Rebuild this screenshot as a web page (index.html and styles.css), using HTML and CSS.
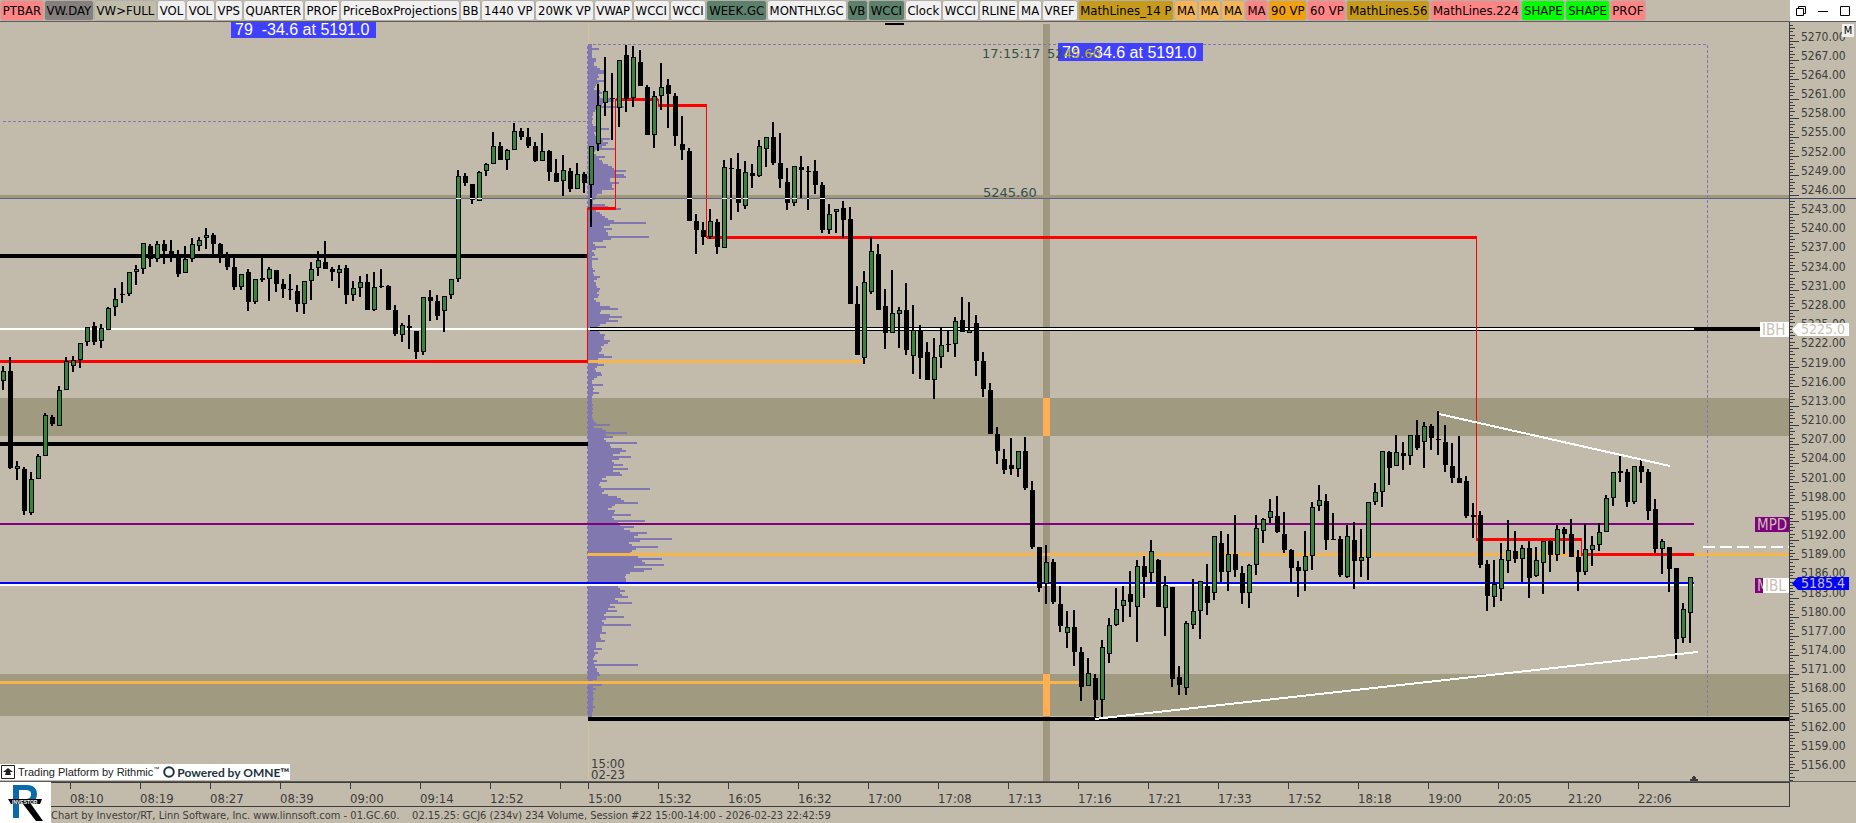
FILE: index.html
```html
<!DOCTYPE html>
<html lang="en">

<head>
  <meta charset="UTF-8" />
  <meta name="viewport" content="width=device-width, initial-scale=1.0" />
  <title>GCJ6 (234v) 234 Volume</title>
  <link rel="stylesheet" href="styles.css">
</head>

<body>
  <header class="toolbar">
    <nav class="tabs">
      <button class="tab red">PTBAR</button>
      <button class="tab gray">VW.DAY</button>
      <button class="tab plain">VW&gt;FULL</button>
      <button class="tab">VOL</button>
      <button class="tab">VOL</button>
      <button class="tab">VPS</button>
      <button class="tab">QUARTER</button>
      <button class="tab">PROF</button>
      <button class="tab">PriceBoxProjections</button>
      <button class="tab">BB</button>
      <button class="tab">1440 VP</button>
      <button class="tab">20WK VP</button>
      <button class="tab">VWAP</button>
      <button class="tab">WCCI</button>
      <button class="tab">WCCI</button>
      <button class="tab green">WEEK.GC</button>
      <button class="tab">MONTHLY.GC</button>
      <button class="tab green">VB</button>
      <button class="tab green">WCCI</button>
      <button class="tab">Clock</button>
      <button class="tab">WCCI</button>
      <button class="tab">RLINE</button>
      <button class="tab">MA</button>
      <button class="tab">VREF</button>
      <button class="tab gold">MathLines_14 P</button>
      <button class="tab sand">MA</button>
      <button class="tab sand">MA</button>
      <button class="tab sand">MA</button>
      <button class="tab red">MA</button>
      <button class="tab orange">90 VP</button>
      <button class="tab red">60 VP</button>
      <button class="tab gold">MathLines.56</button>
      <button class="tab red">MathLines.224</button>
      <button class="tab lime">SHAPE</button>
      <button class="tab lime">SHAPE</button>
      <button class="tab red">PROF</button>
    </nav>
    <div class="window-buttons">
      <button class="win-btn" aria-label="Restore">
        <svg width="10" height="10" viewBox="0 0 10 10"><path d="M.5 2.5h7v7h-7zM2.5 2.5v-2h7v7h-2" /></svg>
      </button>
      <button class="win-btn" aria-label="Minimize">
        <svg width="10" height="10" viewBox="0 0 10 10"><path d="M0 5.5h10" /></svg>
      </button>
      <button class="win-btn" aria-label="Maximize">
        <svg width="10" height="10" viewBox="0 0 10 10"><path d="M.5.5h9v9h-9z" /></svg>
      </button>
    </div>
  </header>

  <main class="main">
    <div class="chart">
      <svg class="plot" viewBox="0 22 1789 759" preserveAspectRatio="none">
        <!-- zones -->
        <rect class="zone" x="0" y="398" width="1789" height="38" />
        <rect class="zone" x="0" y="674" width="1789" height="42" />
        <rect class="zone-line" x="0" y="195" width="1789" height="3" />
        <rect class="zone-line" x="1043" y="24" width="7" height="757" />
        <rect class="zone-hit" x="1043" y="398" width="7" height="38" />
        <rect class="zone-hit" x="1043" y="674" width="7" height="42" />
        <path class="session" d="M588.5 23V781" />

        <g class="js-profile profile"></g>
        <path class="dashed" d="M3 121.5H588M588 44.5H1707.5V716M587.5 46V716" />

        <!-- levels -->
        <g class="levels">
          <path stroke="#000" stroke-width="4" d="M0 256H588M0 444H588M588 719H1789M590 329H1760" />
          <path stroke="#fff" stroke-width="2" d="M0 329H1694M0 585H1694" />
          <path stroke="#00f" stroke-width="2" d="M0 583H1694" />
          <path stroke="#f5b54a" stroke-width="3" d="M588 361.5H864M588 554.5H1789M0 682.5H1079" />
          <path stroke="#800080" stroke-width="2" d="M0 524H1694" />
          <path stroke="#f00" stroke-width="3" d="M0 361.5H588M588 208.5H616M616 99.5H658M658 105.5H707M707 237.5H1477M1476 539.5H1582M1581 554.5H1694" />
          <path stroke="#f00" stroke-width="1" d="M587.5 361V208M615.5 209V99M658.5 99V106M706.5 105V238M1476.5 237V540M1581.5 539V555" />
          <path stroke="#fff" stroke-width="2" stroke-dasharray="12 5" d="M1703 547H1789" />
          <path stroke="#000" stroke-width="2" d="M885 24H904" />
        </g>

        <g class="js-candles"></g>

        <path class="cross" d="M0 198.5H1789" />
        <g class="js-cross-hits" fill="#fff"></g>

        <path class="trend" d="M1439 414L1670 466M1095 719L1698 652" />
        <path fill="#3c3c3c" d="M1690 781v-2h2v-2h1v-1h2v1h1v2h2v2z" />

        <!-- notes on the plot -->
        <rect class="note-box" x="231" y="22" width="145" height="16" />
        <text class="note" x="235" y="35" xml:space="preserve">79  -34.6 at 5191.0</text>
        <rect class="note-box" x="1058" y="43" width="145" height="18" />
        <text class="note" x="1062" y="58" xml:space="preserve">79  -34.6 at 5191.0</text>
        <text class="cursor-text" x="982" y="58">17:15:17</text>
        <text class="cursor-text" x="1047" y="58">52<tspan fill="#b9b400">45.60</tspan></text>
        <text class="cursor-text" x="983" y="197">5245.60</text>
        <text class="axis-text" x="591" y="768">15:00</text>
        <text class="axis-text" x="591" y="779">02-23</text>

        <rect x="1760" y="322" width="29" height="15" fill="#fff" />
        <text class="level-text" x="1762" y="335">IBH</text>
        <rect x="1755" y="517" width="34" height="15" fill="#800080" />
        <text class="level-text" x="1757" y="530">MPD</text>
        <rect x="1755" y="578" width="34" height="15" fill="#800080" />
        <text class="level-text" x="1757" y="591">M</text>
        <rect x="1763" y="578" width="26" height="15" fill="#fff" />
        <text class="level-text" x="1765" y="591">IBL</text>
      </svg>

      <div class="brands">
        <svg width="16" height="14" viewBox="0 0 16 14">
          <path d="M1.5.5h13v13h-13z" fill="#fff" stroke="#222" />
          <path d="M8 3l5 4h-3l1 3H5l1-3H3z" fill="#222" />
        </svg>
        <span class="brand-rithmic">Trading Platform by Rithmic<sup>™</sup></span>
        <svg class="ring" width="12" height="12" viewBox="0 0 12 12"><circle cx="6" cy="6" r="4.8" fill="none" stroke="#1d3340" stroke-width="2" /></svg>
        <span class="brand-omne">Powered by OMNE™</span>
      </div>
    </div>

    <aside class="price-axis">
      <svg class="ticks" viewBox="0 22 10 759" preserveAspectRatio="none"><path class="js-ticks" d="" /></svg>
      <div class="prices js-prices"></div>
      <button class="m-btn">M</button>
      <div class="tag tag-ibh">5225.0</div>
      <div class="tag tag-last">5185.4</div>
      <div class="cross-axis"></div>
    </aside>
  </main>

  <footer class="footer">
    <div class="logo">
      <svg width="36" height="38" viewBox="0 0 36 38">
        <path d="M5 1h14c7 0 10 4 10 9 0 6-4 9-10 10h-8v14H5zM11 6v9h6c4 0 6-1 6-5 0-3-2-4-6-4z" fill="#0a6ba8" fill-rule="evenodd" />
        <path d="M15 20h8l12 17h-7z" fill="#000" />
        <path d="M0 15h34l-2 5H3z" fill="#000" />
        <text class="logo-text" x="4" y="20">INVESTOR</text>
      </svg>
    </div>
    <div class="bottom">
      <div class="time-axis">
        <span class="time">08:10</span>
        <span class="time">08:19</span>
        <span class="time">08:27</span>
        <span class="time">08:39</span>
        <span class="time">09:00</span>
        <span class="time">09:14</span>
        <span class="time">12:52</span>
        <span class="time short"></span>
        <span class="time">15:00</span>
        <span class="time">15:32</span>
        <span class="time">16:05</span>
        <span class="time">16:32</span>
        <span class="time">17:00</span>
        <span class="time">17:08</span>
        <span class="time">17:13</span>
        <span class="time">17:16</span>
        <span class="time">17:21</span>
        <span class="time">17:33</span>
        <span class="time">17:52</span>
        <span class="time">18:18</span>
        <span class="time">19:00</span>
        <span class="time">20:05</span>
        <span class="time">21:20</span>
        <span class="time last">22:06</span>
      </div>
      <p class="status">Chart by Investor/RT, Linn Software, Inc. www.linnsoft.com - 01.GC.60.&nbsp;&nbsp;&nbsp; 02.15.25: GCJ6 (234v) 234 Volume, Session #22 15:00-14:00 - 2026-02-23 22:42:59</p>
    </div>
  </footer>

  <script src="chart.js"></script>
</body>

</html>
```
FILE: styles.css
```css
/* Base Reset */
* {
  margin: 0;
  padding: 0;
  box-sizing: border-box;
}

body {
  background-color: #c2bbab;
  display: flex;
  flex-direction: column;
  height: 100vh;
  overflow: hidden;
  font-family: 'DejaVu Sans Condensed', 'Noto Sans', sans-serif;
  font-size: 12px;
  color: #3c3c3c;
}

button {
  font: inherit;
  border: none;
  cursor: pointer;
}

/* Toolbar */
.toolbar {
  display: flex;
  height: 22px;
  border-bottom: 1px solid #5c5c5c;
}

.tabs {
  display: flex;
  flex: 1;
  margin-right: 144px;
}

.tab {
  flex: 1 0 auto;
  height: 21px;
  border: 1px solid #b4b0a8;
  border-radius: 3px;
  background-color: #f0f0f0;
  color: #000;
  font-size: 13px;
  line-height: 17px;
  white-space: nowrap;
}

.red {
  background-color: #ff8484;
}

.gray {
  background-color: #857f7d;
}

.plain {
  background-color: #c0bdab;
}

.green {
  background-color: #5c806c;
}

.gold {
  background-color: #c69b1b;
}

.sand {
  background-color: #f4b556;
}

.orange {
  background-color: #f0a010;
}

.lime {
  background-color: #00ff00;
}

.window-buttons {
  display: flex;
  width: 66px;
  background-color: #fff;
}

.win-btn {
  flex: 1;
  display: flex;
  align-items: center;
  justify-content: center;
  background-color: transparent;
}

.win-btn path {
  fill: none;
  stroke: #000;
}

/* Chart */
.main {
  flex: 1;
  display: flex;
  min-height: 0;
}

.chart {
  position: relative;
  flex: 1;
}

.plot {
  display: block;
  width: 100%;
  height: 100%;
  shape-rendering: crispEdges;
}

.zone {
  fill: #a09a80;
}

.zone-line {
  fill: #9f9780;
}

.zone-hit {
  fill: #ffae54;
}

.profile {
  fill: #8078ae;
}

.dashed {
  fill: none;
  stroke: #8078ae;
  stroke-dasharray: 3 2;
}

.session {
  stroke: #d2c48f;
}

.cross {
  stroke: #5f6685;
}

.trend {
  stroke: #fff;
  stroke-width: 2;
}

.levels {
  fill: none;
}

.up {
  fill: #378637;
  stroke: #000;
}

.note-box {
  fill: #4040ff;
}

.note {
  font-family: 'Liberation Sans', Arial, sans-serif;
  font-size: 16px;
  fill: #fff;
}

.cursor-text {
  font-family: 'DejaVu Sans', sans-serif;
  font-size: 13px;
  fill: #35504c;
}

.axis-text {
  font-size: 13px;
  fill: #3c3c3c;
}

.level-text {
  font-size: 15px;
  fill: #c8c0b0;
}

.brands {
  position: absolute;
  left: 0;
  bottom: 1px;
  display: flex;
  align-items: center;
  gap: 2px;
  width: 290px;
  height: 16px;
  background-color: #fff;
  font-size: 12px;
  white-space: nowrap;
}

.brands svg {
  flex: none;
}

.brand-rithmic {
  font-family: 'Liberation Sans', Arial, sans-serif;
  font-size: 11px;
  color: #222;
}

.brand-rithmic sup {
  font-size: 6px;
}

.ring {
  margin-left: 2px;
}

.brand-omne {
  font-family: Lato, sans-serif;
  font-weight: bold;
  color: #1d3340;
}

/* Price axis */
.price-axis {
  position: relative;
  display: flex;
  width: 67px;
  border-left: 1px solid #3c3c3c;
}

.ticks {
  width: 10px;
  height: 100%;
  shape-rendering: crispEdges;
  stroke: #3c3c3c;
}

.prices {
  display: flex;
  flex-direction: column;
  padding: 5px 0 6px 1px;
}

.price {
  flex: 1;
  display: flex;
  align-items: center;
  min-height: 0;
  line-height: 16px;
}

.m-btn {
  position: absolute;
  top: 2px;
  right: 2px;
  width: 12px;
  height: 13px;
  background-color: #f0f0f0;
  font-size: 11px;
  line-height: 12px;
}

.tag {
  position: absolute;
  left: 2px;
  width: 57px;
  height: 13px;
  padding-left: 9px;
  clip-path: polygon(0 50%, 6px 0, 100% 0, 100% 100%, 6px 100%);
  font-size: 14px;
  line-height: 13px;
  color: #c8c0b0;
}

.tag-ibh {
  top: 301px;
  background-color: #fff;
}

.tag-last {
  top: 555px;
  background-color: #0000ff;
}

.cross-axis {
  position: absolute;
  top: 176px;
  left: 2px;
  right: 0;
  height: 1px;
  background-color: #3d4566;
}

/* Time axis and status line */
.footer {
  display: flex;
  height: 42px;
  border-top: 1px solid #5c5c5c;
}

.logo {
  width: 51px;
  padding: 2px 8px;
  background-color: #fff;
}

.logo-text {
  font-family: 'Liberation Sans', Arial, sans-serif;
  font-size: 5px;
  font-weight: bold;
  fill: #fff;
}

.bottom {
  flex: 1;
}

.time-axis {
  display: flex;
  height: 25px;
  margin-right: 66px;
  padding-left: 19px;
  border: solid #3c3c3c;
  border-width: 1px 1px 1px 0;
}

.time {
  flex: 70 1 0;
  background: linear-gradient(#3c3c3c, #3c3c3c) 0 0 / 1px 6px no-repeat;
  font-size: 13px;
  line-height: 32px;
}

.short {
  flex-grow: 28;
}

.last {
  flex-grow: 151;
}

.status {
  font-size: 11px;
  line-height: 18px;
  white-space: nowrap;
}
```
FILE: chart.js
```js
const SVG = 'http://www.w3.org/2000/svg';

// [high, body top, body bottom, low, up]
const candles = [
  [366, 371, 381, 390, 1], [357, 371, 468, 469, 0], [461, 466, 469, 480, 1], [467, 469, 511, 515, 0],
  [472, 479, 513, 515, 1], [454, 456, 479, 479, 1], [413, 415, 456, 456, 1], [415, 417, 424, 426, 0],
  [386, 390, 426, 426, 1], [357, 361, 390, 390, 1], [356, 360, 366, 372, 1], [343, 343, 360, 368, 1],
  [327, 327, 342, 346, 1], [322, 326, 342, 345, 0], [324, 328, 341, 348, 1], [307, 308, 330, 330, 1],
  [288, 299, 307, 316, 1], [282, 294, 295, 303, 0], [272, 272, 294, 296, 1], [265, 269, 272, 285, 1],
  [243, 243, 269, 274, 1], [244, 246, 259, 267, 0], [241, 244, 259, 262, 1], [240, 244, 251, 264, 0],
  [240, 251, 256, 262, 0], [250, 254, 274, 277, 0], [246, 259, 273, 273, 1], [238, 244, 259, 262, 1],
  [237, 240, 246, 251, 1], [228, 235, 238, 249, 1], [233, 235, 244, 254, 0], [243, 244, 257, 263, 0],
  [252, 256, 267, 270, 0], [256, 267, 287, 290, 0], [274, 274, 287, 290, 1], [269, 272, 302, 311, 0],
  [279, 279, 302, 304, 1], [257, 278, 280, 282, 0], [267, 269, 279, 301, 1], [270, 270, 284, 292, 0],
  [279, 284, 289, 298, 0], [274, 289, 290, 300, 0], [285, 291, 304, 312, 0], [281, 281, 304, 314, 1],
  [262, 269, 281, 300, 1], [251, 260, 268, 276, 1], [241, 262, 269, 269, 0], [267, 269, 272, 281, 0],
  [265, 269, 273, 288, 1], [265, 268, 295, 304, 0], [281, 288, 295, 301, 1], [276, 282, 288, 297, 1],
  [274, 282, 310, 310, 0], [272, 287, 310, 311, 1], [269, 286, 287, 288, 0], [285, 286, 310, 310, 0],
  [305, 310, 334, 336, 0], [323, 325, 335, 342, 1], [315, 326, 328, 349, 0], [331, 331, 352, 359, 0],
  [297, 297, 352, 355, 1], [290, 297, 301, 321, 0], [295, 301, 316, 320, 0], [296, 296, 311, 332, 1],
  [279, 279, 295, 299, 1], [170, 176, 279, 282, 1], [173, 176, 183, 186, 0], [184, 184, 200, 204, 0],
  [171, 172, 201, 201, 1], [163, 164, 171, 176, 1], [132, 146, 164, 164, 1], [142, 146, 160, 160, 0],
  [149, 150, 160, 170, 1], [123, 131, 150, 150, 1], [128, 131, 137, 140, 0], [128, 137, 146, 148, 0],
  [142, 146, 161, 162, 0], [133, 151, 161, 161, 1], [150, 151, 172, 181, 0], [159, 173, 182, 182, 0],
  [155, 170, 181, 196, 1], [168, 171, 189, 192, 0], [163, 174, 189, 189, 1], [172, 174, 183, 193, 0],
  [146, 146, 185, 227, 1], [84, 105, 144, 151, 1], [57, 91, 103, 116, 1], [73, 98, 99, 140, 0],
  [60, 60, 108, 127, 1], [45, 55, 99, 112, 0], [46, 57, 98, 107, 1], [50, 62, 86, 86, 0],
  [85, 87, 135, 135, 0], [91, 96, 135, 148, 1], [63, 87, 96, 110, 1], [79, 85, 94, 128, 0],
  [93, 96, 136, 146, 0], [116, 144, 150, 160, 0], [148, 151, 221, 221, 0], [214, 221, 230, 254, 0],
  [222, 230, 237, 245, 0], [209, 221, 237, 239, 1], [219, 222, 247, 254, 0], [160, 167, 248, 248, 1],
  [158, 168, 169, 220, 0], [153, 169, 203, 212, 0], [161, 172, 206, 209, 1], [164, 173, 176, 188, 0],
  [140, 146, 176, 177, 1], [137, 137, 149, 167, 1], [122, 137, 163, 165, 0], [133, 163, 179, 188, 0],
  [168, 182, 203, 210, 0], [166, 166, 203, 206, 1], [156, 167, 170, 199, 0], [166, 171, 172, 210, 0],
  [160, 171, 185, 194, 0], [182, 185, 230, 233, 0], [204, 214, 230, 234, 1], [209, 209, 212, 233, 1],
  [201, 208, 220, 238, 0], [207, 219, 304, 304, 0], [286, 304, 355, 355, 0], [271, 282, 358, 364, 1],
  [237, 251, 292, 294, 1], [244, 254, 310, 310, 0], [289, 306, 333, 349, 0], [270, 313, 333, 333, 1],
  [307, 310, 314, 348, 1], [283, 310, 350, 355, 0], [305, 330, 356, 374, 1], [325, 330, 358, 379, 0],
  [342, 352, 380, 380, 0], [338, 357, 380, 399, 1], [327, 345, 357, 368, 1], [330, 344, 345, 352, 0],
  [317, 321, 344, 357, 1], [297, 320, 332, 332, 0], [302, 330, 333, 333, 1], [315, 323, 361, 376, 0],
  [352, 361, 389, 397, 0], [383, 390, 434, 434, 0], [427, 434, 451, 464, 0], [449, 459, 470, 474, 0],
  [438, 465, 469, 475, 0], [451, 451, 469, 477, 1], [437, 451, 488, 490, 0], [481, 490, 547, 549, 0],
  [547, 547, 588, 592, 0], [545, 562, 584, 604, 1], [559, 562, 602, 604, 0], [586, 604, 626, 632, 0],
  [611, 627, 633, 648, 1], [610, 627, 652, 666, 0], [647, 652, 687, 701, 0], [658, 673, 686, 686, 1],
  [674, 678, 700, 718, 0], [640, 647, 700, 718, 1], [618, 625, 654, 663, 1], [588, 609, 625, 626, 1],
  [586, 600, 606, 622, 1], [571, 594, 602, 617, 0], [560, 566, 607, 642, 1], [556, 566, 577, 598, 0],
  [540, 551, 573, 582, 1], [559, 560, 607, 607, 0], [576, 585, 608, 636, 1], [587, 587, 679, 687, 0],
  [666, 677, 685, 695, 0], [621, 623, 688, 695, 1], [579, 611, 625, 629, 1], [581, 581, 611, 639, 1],
  [564, 586, 603, 615, 0], [536, 536, 593, 600, 1], [531, 543, 572, 582, 0], [534, 554, 572, 591, 1],
  [515, 554, 570, 577, 0], [566, 573, 593, 604, 0], [564, 565, 593, 608, 1], [515, 528, 565, 575, 1],
  [518, 519, 531, 543, 1], [499, 511, 518, 523, 1], [496, 516, 532, 533, 0], [512, 534, 550, 553, 0],
  [549, 550, 568, 583, 0], [561, 567, 571, 597, 0], [531, 556, 571, 591, 1], [502, 507, 556, 570, 1],
  [485, 500, 506, 511, 1], [494, 501, 540, 550, 0], [513, 539, 540, 540, 0], [536, 539, 575, 577, 0],
  [525, 536, 577, 578, 1], [522, 540, 561, 589, 0], [529, 557, 561, 577, 1], [502, 502, 558, 580, 1],
  [483, 492, 502, 505, 1], [451, 451, 492, 507, 1], [451, 452, 468, 485, 0], [435, 452, 466, 466, 1],
  [442, 453, 456, 470, 0], [435, 435, 456, 465, 1], [420, 435, 448, 450, 0], [422, 426, 442, 468, 1],
  [424, 426, 438, 450, 0], [411, 439, 440, 455, 0], [425, 442, 465, 472, 0], [443, 466, 478, 483, 0],
  [436, 478, 483, 483, 0], [476, 481, 516, 518, 0], [503, 515, 517, 538, 0], [511, 515, 565, 568, 0],
  [560, 564, 596, 611, 0], [560, 584, 597, 607, 1], [543, 559, 589, 601, 1], [520, 550, 561, 573, 1],
  [531, 551, 559, 563, 0], [545, 548, 559, 582, 1], [541, 548, 578, 598, 0], [547, 560, 576, 577, 1],
  [541, 541, 563, 594, 1], [540, 541, 555, 572, 0], [525, 529, 555, 561, 1], [527, 529, 534, 554, 0],
  [519, 534, 557, 557, 0], [550, 557, 572, 591, 0], [524, 549, 572, 575, 1], [536, 545, 550, 566, 1],
  [523, 532, 545, 551, 1], [495, 498, 532, 532, 1], [472, 472, 498, 506, 1], [454, 471, 473, 482, 0],
  [469, 472, 502, 507, 0], [466, 466, 502, 504, 1], [459, 466, 472, 483, 0], [469, 472, 511, 520, 0],
  [499, 509, 549, 553, 0], [539, 541, 549, 574, 1], [547, 547, 569, 592, 0], [568, 568, 639, 659, 0],
  [603, 609, 638, 643, 1], [577, 577, 613, 643, 1],
];

// volume at price, one value for each 2 units of height
const profile = [
  4, 4, 11, 4, 4, 4, 4, 8, 8, 6,
  6, 9, 12, 16, 16, 10, 11, 9, 16, 11,
  8, 7, 6, 12, 14, 11, 12, 26, 26, 15,
  14, 36, 9, 7, 5, 5, 4, 5, 4, 4,
  5, 8, 21, 8, 6, 7, 10, 22, 15, 20,
  18, 14, 28, 7, 6, 8, 17, 11, 14, 15,
  20, 24, 26, 38, 28, 36, 38, 22, 22, 31,
  24, 24, 26, 14, 14, 9, 8, 7, 5, 5,
  17, 20, 33, 8, 12, 14, 17, 20, 26, 58,
  22, 16, 24, 18, 20, 20, 61, 23, 15, 5,
  7, 18, 8, 4, 6, 7, 4, 10, 4, 4,
  4, 4, 5, 7, 5, 6, 12, 9, 6, 8,
  8, 9, 12, 11, 9, 11, 10, 6, 8, 12,
  12, 22, 30, 13, 12, 22, 34, 21, 30, 18,
  12, 10, 10, 11, 12, 17, 16, 16, 22, 20,
  16, 13, 14, 13, 11, 16, 24, 10, 6, 10,
  16, 9, 7, 8, 13, 14, 9, 6, 4, 4,
  15, 5, 6, 5, 11, 5, 4, 4, 4, 4,
  5, 4, 5, 4, 5, 4, 4, 5, 6, 8,
  22, 6, 14, 18, 39, 18, 25, 16, 18, 49,
  22, 23, 34, 38, 32, 25, 43, 31, 24, 26,
  35, 25, 40, 25, 32, 34, 18, 14, 19, 12,
  11, 13, 62, 16, 14, 20, 29, 33, 36, 50,
  27, 24, 20, 27, 26, 43, 24, 26, 57, 30,
  32, 46, 36, 42, 59, 50, 46, 84, 52, 41,
  44, 70, 48, 44, 42, 44, 50, 74, 54, 57,
  76, 46, 64, 56, 42, 38, 37, 38, 38, 38,
  66, 30, 32, 37, 32, 34, 40, 27, 30, 44,
  22, 27, 20, 29, 18, 16, 36, 18, 14, 16,
  43, 14, 14, 14, 18, 12, 12, 13, 17, 8,
  8, 8, 14, 6, 10, 7, 6, 5, 9, 6,
  50, 7, 9, 9, 11, 12, 9, 9, 5, 5,
  14, 5, 8, 5, 6, 5, 5, 6, 5, 5,
  5, 7, 5, 5, 4, 4, 4,
];

function addRect(parent, x, y, width, height, className) {
  const rect = document.createElementNS(SVG, 'rect');
  rect.setAttribute('x', x);
  rect.setAttribute('y', y);
  rect.setAttribute('width', width);
  rect.setAttribute('height', height);
  if (className) rect.setAttribute('class', className);
  parent.appendChild(rect);
}

const candleGroup = document.querySelector('.js-candles');
const hitGroup = document.querySelector('.js-cross-hits');

candles.forEach(([high, top, bottom, low, up], i) => {
  const x = 1 + i * 7;
  addRect(candleGroup, x + 1, high, 2, low - high);
  if (up) {
    addRect(candleGroup, x + 0.5, top + 0.5, 4, Math.max(bottom - top - 1, 1), 'up');
  } else {
    addRect(candleGroup, x, top, 5, bottom - top);
  }
  if (top < 198 && bottom > 199) {
    addRect(hitGroup, x, 198, 5, 1);
  } else if (high < 198 && low > 199) {
    addRect(hitGroup, x + 1, 198, 2, 1);
  }
});

const profileGroup = document.querySelector('.js-profile');
profile.forEach((width, i) => {
  addRect(profileGroup, 588, 44 + i * 2, width, 2);
});

// price labels and ticks, 3 points apart
const priceList = document.querySelector('.js-prices');
for (let price = 5270; price >= 5156; price -= 3) {
  const label = document.createElement('span');
  label.className = 'price';
  label.textContent = price.toFixed(2);
  priceList.appendChild(label);
}

let ticks = '';
for (let n = -5; n < 232; n++) {
  const y = Math.round(41 + (n * 19.19) / 6) + 0.5;
  const length = n % 6 === 0 ? 9 : n % 2 === 0 ? 5 : 3;
  ticks += `M0 ${y}h${length}`;
}
document.querySelector('.js-ticks').setAttribute('d', ticks);
```
